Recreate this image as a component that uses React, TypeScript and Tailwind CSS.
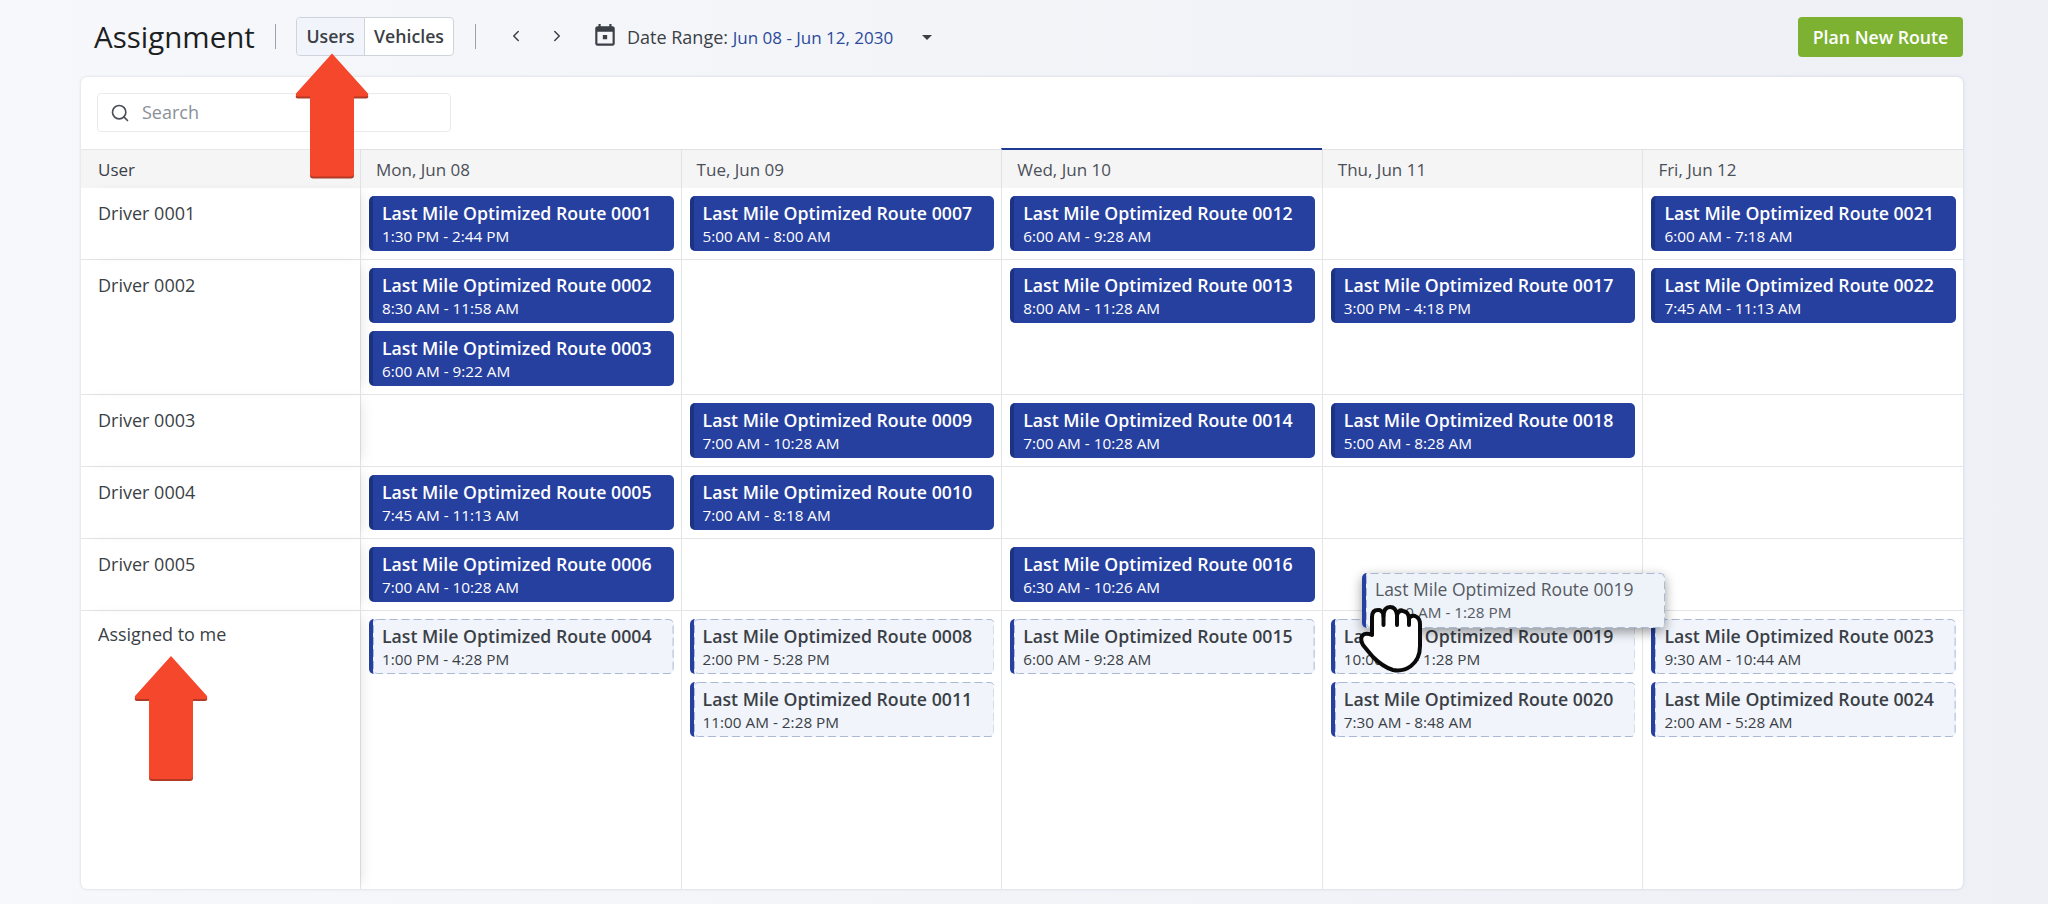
import { ChevronLeft, ChevronRight, Search } from "lucide-react";

type Route = { id: string; time: string };

const DAYS = ["Mon, Jun 08", "Tue, Jun 09", "Wed, Jun 10", "Thu, Jun 11", "Fri, Jun 12"];

const ROWS: { name: string; cells: Route[][] }[] = [
  {
    name: "Driver 0001",
    cells: [
      [{ id: "0001", time: "1:30 PM - 2:44 PM" }],
      [{ id: "0007", time: "5:00 AM - 8:00 AM" }],
      [{ id: "0012", time: "6:00 AM - 9:28 AM" }],
      [],
      [{ id: "0021", time: "6:00 AM - 7:18 AM" }],
    ],
  },
  {
    name: "Driver 0002",
    cells: [
      [
        { id: "0002", time: "8:30 AM - 11:58 AM" },
        { id: "0003", time: "6:00 AM - 9:22 AM" },
      ],
      [],
      [{ id: "0013", time: "8:00 AM - 11:28 AM" }],
      [{ id: "0017", time: "3:00 PM - 4:18 PM" }],
      [{ id: "0022", time: "7:45 AM - 11:13 AM" }],
    ],
  },
  {
    name: "Driver 0003",
    cells: [
      [],
      [{ id: "0009", time: "7:00 AM - 10:28 AM" }],
      [{ id: "0014", time: "7:00 AM - 10:28 AM" }],
      [{ id: "0018", time: "5:00 AM - 8:28 AM" }],
      [],
    ],
  },
  {
    name: "Driver 0004",
    cells: [
      [{ id: "0005", time: "7:45 AM - 11:13 AM" }],
      [{ id: "0010", time: "7:00 AM - 8:18 AM" }],
      [],
      [],
      [],
    ],
  },
  {
    name: "Driver 0005",
    cells: [
      [{ id: "0006", time: "7:00 AM - 10:28 AM" }],
      [],
      [{ id: "0016", time: "6:30 AM - 10:26 AM" }],
      [],
      [],
    ],
  },
];

const UNASSIGNED: Route[][] = [
  [{ id: "0004", time: "1:00 PM - 4:28 PM" }],
  [
    { id: "0008", time: "2:00 PM - 5:28 PM" },
    { id: "0011", time: "11:00 AM - 2:28 PM" },
  ],
  [{ id: "0015", time: "6:00 AM - 9:28 AM" }],
  [
    { id: "0019", time: "10:00 AM - 1:28 PM" },
    { id: "0020", time: "7:30 AM - 8:48 AM" },
  ],
  [
    { id: "0023", time: "9:30 AM - 10:44 AM" },
    { id: "0024", time: "2:00 AM - 5:28 AM" },
  ],
];

function AssignedCard({ route }: { route: Route }) {
  return (
    <div className="h-[55px] rounded-[5px] border-l-[4px] border-l-[#1c3382] bg-[#26409f] pl-[9px] pt-[5px] text-white">
      <div className="text-[17.7px] leading-[24px] font-semibold whitespace-nowrap">Last Mile Optimized Route {route.id}</div>
      <div className="text-[15.3px] leading-[22px] whitespace-nowrap">{route.time}</div>
    </div>
  );
}

// the long dashes of the outline don't come from a css border
function DashedOutline() {
  return (
    <svg className="pointer-events-none absolute inset-0 h-full w-full" fill="none">
      <rect
        x="0.5"
        y="0.5"
        rx="4"
        className="h-[calc(100%-1px)] w-[calc(100%-1px)]"
        stroke="#a9b9d6"
        strokeDasharray="8 4"
      />
    </svg>
  );
}

function DraftCard({ route }: { route: Route }) {
  return (
    <div className="relative h-[55px] rounded-[5px] border-l-[4px] border-l-[#26409f] bg-[#f1f5fb] pl-[9px] pt-[5px] text-[#3b3f46]">
      <DashedOutline />
      <div className="text-[17.7px] leading-[24px] font-semibold whitespace-nowrap">Last Mile Optimized Route {route.id}</div>
      <div className="text-[15.3px] leading-[22px] whitespace-nowrap">{route.time}</div>
    </div>
  );
}

function Arrow({ className }: { className: string }) {
  return (
    <svg className={className} viewBox="0 0 74 126" fill="none">
      <path d="M37 1 L73 42 Q74 45 71 45 H59 V122 Q59 125 56 125 H18 Q15 125 15 122 V45 H3 Q0 45 1 42 Z" fill="#b23a25" />
      <path d="M37 0 L73 40 Q74 43 71 43 H59 V120 Q59 123 56 123 H18 Q15 123 15 120 V43 H3 Q0 43 1 40 Z" fill="#f4472b" />
    </svg>
  );
}

export default function App() {
  return (
    <div
      className="relative h-[904px] overflow-hidden bg-gradient-to-r from-[#f7f8fb] to-[#eef0f6] pl-[81px] pr-[85px] text-[#3b3f46]"
      style={{ fontFamily: '"Open Sans", "Noto Sans", sans-serif' }}
    >
      {/* top bar */}
      <div className="flex h-[77px] items-start pt-[17px]">
        <div className="ml-[13px] w-[181px] text-[29.5px] leading-[39px] text-[#1d1f23]">Assignment</div>
        <div className="mt-[7px] h-[25px] w-px bg-[#9ca3af]" />
        <div className="ml-[20px] flex h-[39px] w-[158px] rounded-[4px] border border-[#cfd4dc] bg-white text-[17.7px] font-semibold">
          <div className="flex w-[68px] items-center justify-center rounded-l-[4px] border-r border-[#cfd4dc] bg-[#f1f5fb]">Users</div>
          <div className="flex flex-1 items-center justify-center">Vehicles</div>
        </div>
        <div className="ml-[21px] mt-[7px] h-[25px] w-px bg-[#9ca3af]" />
        <ChevronLeft className="ml-[31px] mt-[10px] text-[#3b3f46]" size={18} />
        <ChevronRight className="ml-[23px] mt-[10px] text-[#3b3f46]" size={18} />
        <svg className="ml-[26px] mt-[6px] text-[#3b3f46]" width="26" height="26" viewBox="0 0 24 24" fill="currentColor">
          <path d="M19 3h-1V1h-2v2H8V1H6v2H5c-1.1 0-2 .9-2 2v14c0 1.1.9 2 2 2h14c1.100 0 2-.9 2-2V5c0-1.100-.9-2-2-2zm0 16H5V8h14v11zM10 11h4v4h-4z" />
        </svg>
        <div className="ml-[9px] mt-[8px] text-[18px] leading-[24px] whitespace-nowrap">
          Date Range: <span className="text-[17px] font-medium text-[#2b4a9b]">Jun 08 - Jun 12, 2030</span>
        </div>
        <div className="ml-[29px] mt-[18px] h-0 w-0 border-x-[5px] border-t-[5px] border-x-transparent border-t-[#3b3f46]" />
        <button className="ml-auto h-[40px] w-[165px] rounded-[4px] bg-[#7cb132] text-[17.7px] font-semibold text-white">Plan New Route</button>
      </div>

      {/* board */}
      <div className="h-[812px] overflow-hidden rounded-[6px] bg-white shadow-[0_0_3px_rgba(100,110,130,0.25)]">
        <div className="h-[72px] pl-[16px] pt-[16px]">
          <div className="flex h-[39px] w-[354px] items-center rounded-[4px] border border-[#e8eaee] pl-[12px] text-[18px] text-[#8b9098]">
            <Search size={20} className="text-[#4b5058]" />
            <span className="ml-[12px]">Search</span>
          </div>
        </div>

        <div className="grid grid-cols-[279px_repeat(5,1fr)]">
          {/* header */}
          <div className="relative z-10 flex h-[39px] items-center border-t border-[#e5e7eb] bg-[#f5f5f6] pl-[17px] pt-px text-[17px] font-medium">User</div>
          {DAYS.map((day, i) => (
            <div
              key={day}
              className={
                i === 2
                  ? "relative -mt-px flex h-[40px] items-center border-t-2 border-l border-t-[#1f3a93] border-l-[#e0e2e6] bg-[#f5f5f6] pl-[15px] pt-[2px] text-[17px] text-[#4b5058]"
                  : "flex h-[39px] items-center border-t border-l border-[#e0e2e6] bg-[#f5f5f6] pl-[15px] pt-px text-[17px] text-[#4b5058]"
              }
            >
              {day}
            </div>
          ))}

          {/* driver rows */}
          {ROWS.map((row) => (
            <div key={row.name} className="col-span-6 grid grid-cols-[279px_repeat(5,1fr)] border-b border-[#e3e5e9]">
              <div className="relative z-10 pl-[17px] pt-[12px] text-[18px] leading-[26px] shadow-[8px_0_12px_-6px_rgba(0,0,0,0.1)]">{row.name}</div>
              {row.cells.map((routes, i) => (
                <div key={i} className="flex flex-col gap-[8px] border-l border-[#e3e5e9] pl-[8px] pr-[7px] py-[8px]">
                  {routes.map((route) => (
                    <AssignedCard key={route.id} route={route} />
                  ))}
                </div>
              ))}
            </div>
          ))}

          {/* assigned to me */}
          <div className="col-span-6 grid h-[278px] grid-cols-[279px_repeat(5,1fr)]">
            <div className="relative z-10 pl-[17px] pt-[10px] text-[18px] leading-[26px] shadow-[8px_0_12px_-6px_rgba(0,0,0,0.1)]">Assigned to me</div>
            {UNASSIGNED.map((routes, i) => (
              <div key={i} className="flex flex-col gap-[8px] border-l border-[#e3e5e9] pl-[8px] pr-[7px] py-[8px]">
                {routes.map((route) => (
                  <DraftCard key={route.id} route={route} />
                ))}
              </div>
            ))}
          </div>
        </div>
      </div>

      {/* card being dragged */}
      <div className="absolute left-[1362px] top-[573px] z-20 h-[55px] w-[303px] rounded-[5px] border-l-[4px] border-l-[#26409f] bg-[#eef2f9] pl-[9px] pt-[4px] text-[#555a62] shadow-[0_4px_12px_rgba(0,0,0,0.4)]">
        <DashedOutline />
        <div className="text-[17.5px] leading-[24px] font-medium whitespace-nowrap">Last Mile Optimized Route 0019</div>
        <div className="text-[15.3px] leading-[22px] whitespace-nowrap">10:00 AM - 1:28 PM</div>
      </div>

      {/* grab cursor */}
      <svg className="absolute left-[1359px] top-[604px] z-30" width="64" height="70" viewBox="0 0 64 70" fill="none">
        <path
          d="M13 30 V13 Q13 6 19 6 Q24 6 24.500 12 Q25 3 31 3 Q37 3 38 11 Q39 6 44 7 Q50 8 50 15 Q51 11 56 12 Q61 14 61 20 V42 Q61 55 52 62 Q44 68 34 66 Q24 63 14 53 Q8 46 4 41 Q1 36 3 32 Q6 28 13 31 Z"
          fill="#fff"
          stroke="#0a0a0a"
          strokeWidth="4"
          strokeLinejoin="round"
        />
        <path d="M24.500 12 V21 M38 11 V21 M50 15 V21" stroke="#0a0a0a" strokeWidth="4" strokeLinecap="round" />
      </svg>

      {/* annotation arrows */}
      <Arrow className="absolute left-[295px] top-[53px] z-30 h-[127px] w-[74px]" />
      <Arrow className="absolute left-[134px] top-[656px] z-30 h-[126px] w-[74px]" />
    </div>
  );
}
